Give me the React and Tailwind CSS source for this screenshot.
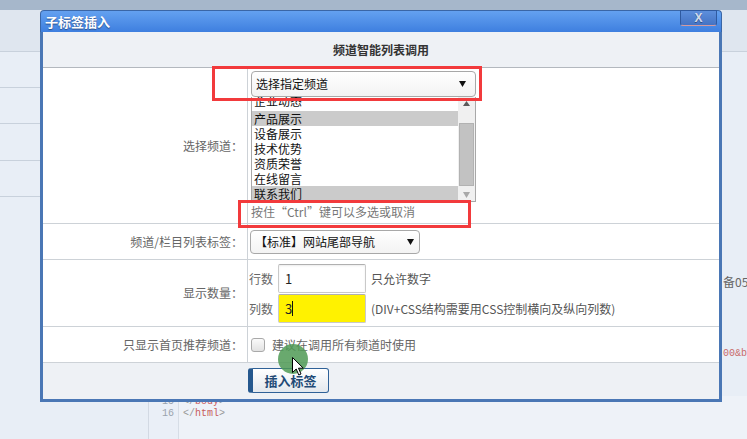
import React from 'react';

function Tri({ color = '#111' }) {
  return (
    <svg width="7" height="6" viewBox="0 0 7 6" className="shrink-0">
      <path d="M0 0H7L3.5 6Z" fill={color} />
    </svg>
  );
}

function TriUp({ color = '#555' }) {
  return (
    <svg width="7" height="5" viewBox="0 0 7 5" className="shrink-0">
      <path d="M0 5H7L3.5 0Z" fill={color} />
    </svg>
  );
}

export default function App() {
  const items = ['产品展示', '设备展示', '技术优势', '资质荣誉', '在线留言', '联系我们'];
  const picked = { 产品展示: true, 联系我们: true };
  return (
    <div className="relative w-[747px] h-[439px] overflow-hidden bg-[#e8eef6] font-['Noto_Sans_CJK_SC','Noto_Sans',sans-serif]">
      {/* background page */}
      <div className="flex flex-col h-full">
        <div className="h-[10px] shrink-0 bg-[#a6b7cb]" />
        <div className="flex flex-1 min-h-0">
          <div className="w-[40px] flex flex-col">
            <div className="h-[42px] border-b border-[#c8d1dc] bg-[#dfe6ef]" />
            <div className="h-[36px] border-b border-[#c8d1dc]" />
            <div className="h-[36px] border-b border-[#c8d1dc]" />
            <div className="h-[37px] border-b border-[#c8d1dc]" />
            <div className="h-[36px] border-b border-[#c8d1dc]" />
          </div>
          <div className="flex-1" />
          <div className="w-[25px] flex flex-col">
            <div className="h-[42px] border-b border-[#c8d1dc] bg-[#dfe6ef]" />
            <div className="mt-[223px] pl-[1px] text-[12px] leading-[14px] text-[#666] whitespace-nowrap">备050</div>
            <div className="mt-[58px] pl-[1px] text-[10px] leading-[14px] text-[#c86a6a] whitespace-nowrap font-['Liberation_Mono',monospace]">00&amp;b</div>
          </div>
        </div>
        <div className="h-[43px] shrink-0 flex">
          <div className="w-[149px] border-r border-[#d2d9e3]" />
          <div className="w-[30px] border-r border-[#d6dde6] bg-[#eaeff7] flex flex-col items-end pr-[4px] text-[10px] leading-[12px] text-[#9aa3ad] font-['Liberation_Mono',monospace]">
            <div className="h-[12px]">15</div>
            <div className="h-[12px]">16</div>
          </div>
          <div className="flex-1 bg-[#eef2f8] pl-[4px] flex flex-col text-[10px] leading-[12px] font-['Liberation_Mono',monospace]">
            <div className="h-[12px]"><span className="text-[#999]">&lt;/</span><span className="text-[#c85c5c]">body</span><span className="text-[#999]">&gt;</span></div>
            <div className="h-[12px]"><span className="text-[#999]">&lt;/</span><span className="text-[#c85c5c]">html</span><span className="text-[#999]">&gt;</span></div>
          </div>
        </div>
      </div>

      {/* dialog window */}
      <div className="absolute left-[40px] top-[10px] w-[682px] h-[392px] flex flex-col">
        <div className="relative h-[22px] shrink-0 rounded-t-[4px] border border-b-0 border-[#3a66a6] bg-gradient-to-b from-[#64a1f0] to-[#3e7fdf] flex items-center pl-[4px]">
          <span className="text-white font-bold text-[13px] leading-none [text-shadow:0_1px_1px_#2b4f88]">子标签插入</span>
          <div className="absolute right-[4px] top-[-1px] w-[37px] h-[16px] rounded-b-[3px] border border-[#2f5aa0] border-b-[#d49aa0] bg-gradient-to-b from-[#5d8fdc] to-[#4473c4] flex items-center justify-center">
            <span className="text-[12px] leading-none font-bold text-[#d3dbe8] font-['Liberation_Sans',sans-serif] [text-shadow:0_1px_0_#2d4f8a]">X</span>
          </div>
        </div>
        <div className="flex-1 flex flex-col border-x-[3px] border-b-[3px] border-[#4a77b5] bg-white">
          {/* header */}
          <div className="h-[36px] shrink-0 border-b border-[#b3b8be] bg-[#eef1f5] flex items-center justify-center">
            <span className="text-[12px] font-bold text-[#333]">频道智能列表调用</span>
          </div>
          {/* row 1 */}
          <div className="h-[156px] shrink-0 flex border-b border-[#cdd2d7]">
            <div className="w-[205px] shrink-0 border-r border-[#cdd2d7] flex items-center justify-end pr-[4px] text-[12px] text-[#666]">选择频道：</div>
            <div className="flex-1 pl-[3px] pt-[3px] flex flex-col">
              <div className="w-[225px] h-[26px] rounded-[4px] border border-[#a8a8a8] bg-gradient-to-b from-white to-[#f3f3f3] flex items-center justify-between pl-[4px] pr-[9px] relative z-10">
                <span className="text-[12px] text-[#111] leading-none">选择指定频道</span>
                <Tri />
              </div>
              <div className="w-[225px] h-[105px] border-x border-b border-[#a8a8a8] flex overflow-hidden bg-white">
                <div className="flex-1 flex flex-col text-[12px] leading-[15px] text-[#111]">
                  <div className="h-[15px] overflow-hidden pl-[2px]"><div className="mt-[-4px]">企业动态</div></div>
                  {items.map((t) => (
                    <div key={t} className={'h-[15px] pl-[2px] whitespace-nowrap ' + (picked[t] ? 'bg-[#cbcbcb]' : '')}>{t}</div>
                  ))}
                </div>
                <div className="w-[17px] bg-[#f0f0f0] flex flex-col items-center">
                  <div className="h-[13px] flex items-center justify-center"><TriUp color="#5a5a5a" /></div>
                  <div className="h-[13px]" />
                  <div className="w-[15px] h-[63px] bg-[#c2c2c2] border border-[#b2b2b2]" />
                  <div className="flex-1" />
                  <div className="h-[13px] flex items-center justify-center"><Tri color="#a8a8a8" /></div>
                </div>
              </div>
              <div className="mt-[2px] text-[12px] leading-[16px] text-[#777] whitespace-nowrap">按住“Ctrl”键可以多选或取消</div>
            </div>
          </div>
          {/* row 2 */}
          <div className="h-[36px] shrink-0 flex border-b border-[#cdd2d7]">
            <div className="w-[205px] shrink-0 border-r border-[#cdd2d7] flex items-center justify-end pr-[4px] text-[12px] text-[#666]">频道/栏目列表标签：</div>
            <div className="flex-1 pl-[2px] flex items-center">
              <div className="w-[170px] h-[24px] rounded-[4px] border border-[#a8a8a8] bg-gradient-to-b from-white to-[#f3f3f3] flex items-center justify-between pl-[4px] pr-[5px]">
                <span className="text-[12px] text-[#111] leading-none whitespace-nowrap">【标准】网站尾部导航</span>
                <Tri />
              </div>
            </div>
          </div>
          {/* row 3 */}
          <div className="h-[67px] shrink-0 flex border-b border-[#cdd2d7]">
            <div className="w-[205px] shrink-0 border-r border-[#cdd2d7] flex items-center justify-end pr-[4px] text-[12px] text-[#666]">显示数量：</div>
            <div className="flex-1 pl-[1px] pt-[4px] flex flex-col gap-[1px] text-[12px] text-[#555]">
              <div className="flex items-center h-[29px]">
                <span className="w-[29px] text-[#666]">行数</span>
                <div className="w-[88px] h-[29px] rounded-[2px] border border-[#c9c9c9] border-t-[#b0b0b0] bg-white shadow-[inset_0_1px_2px_rgba(0,0,0,0.08)] flex items-center pl-[6px] text-[13px] text-[#222]">1</div>
                <span className="ml-[5px] whitespace-nowrap">只允许数字</span>
              </div>
              <div className="flex items-center h-[29px]">
                <span className="w-[29px] text-[#666]">列数</span>
                <div className="w-[88px] h-[29px] rounded-[2px] border border-[#c9c9c9] border-t-[#b0b0b0] bg-[#fff200] flex items-center pl-[6px] text-[13px] text-[#222]">
                  3<span className="w-[1px] h-[15px] bg-[#111]" />
                </div>
                <span className="ml-[5px] whitespace-nowrap">(DIV+CSS结构需要用CSS控制横向及纵向列数)</span>
              </div>
            </div>
          </div>
          {/* row 4 */}
          <div className="h-[36px] shrink-0 flex border-b border-[#cdd2d7]">
            <div className="w-[205px] shrink-0 border-r border-[#cdd2d7] flex items-center justify-end pr-[4px] text-[12px] text-[#666]">只显示首页推荐频道：</div>
            <div className="flex-1 pl-[3px] flex items-center">
              <div className="w-[14px] h-[14px] rounded-[3px] border border-[#a9a9a9] bg-gradient-to-b from-[#fafafa] to-[#e2e2e2]" />
              <span className="ml-[7px] text-[12px] text-[#666]">建议在调用所有频道时使用</span>
            </div>
          </div>
          {/* footer */}
          <div className="flex-1 bg-[#eef1f5] pl-[205px] pt-[5px]">
            <div className="w-[81px] h-[25px] rounded-[3px] border border-[#2f6197] border-l-[5px] border-l-[#25588e] bg-gradient-to-b from-white to-[#e3e8ee] flex items-center justify-center">
              <span className="text-[13px] font-bold text-[#1f4a76] leading-none">插入标签</span>
            </div>
          </div>
        </div>
      </div>

      {/* annotation overlays */}
      <div className="absolute left-[212px] top-[66px] w-[270px] h-[35px] border-[3px] border-[#f23a3c]" />
      <div className="absolute left-[238px] top-[200px] w-[233px] h-[28px] border-[3px] border-[#f23a3c]" />
      <div className="absolute left-[278px] top-[344px] w-[30px] h-[30px] rounded-full bg-[#4f9a55]/85" />
      <svg className="absolute left-[292px] top-[357px]" width="12" height="19" viewBox="0 0 12 19">
        <path d="M0.5 0.5V15.5L4.2 12L6.8 18L9 17L6.5 11.2H11.3Z" fill="#fff" stroke="#000" strokeWidth="1" strokeLinejoin="round" />
      </svg>
    </div>
  );
}
